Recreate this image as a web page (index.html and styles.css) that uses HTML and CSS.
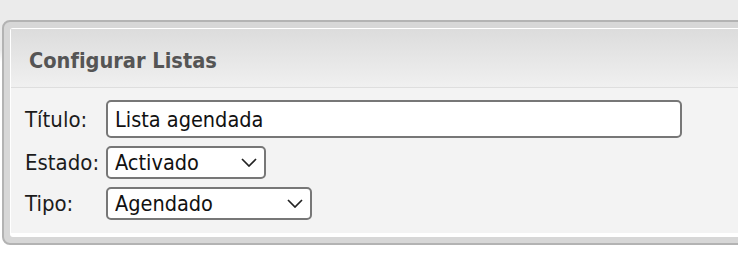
FILE: index.html
```html
<!DOCTYPE html>
<html lang="es">
<head>
<meta charset="utf-8">
<title>Configurar Listas</title>
<link rel="stylesheet" href="styles.css">
</head>
<body>
<div class="page">
  <div class="panel">
    <div class="inner">
      <div class="header">Configurar Listas</div>
      <div class="content">
        <label class="label" for="titulo">Título:</label>
        <div class="field"><input id="titulo" class="text-input" type="text" value="Lista agendada"></div>
        <label class="label" for="estado">Estado:</label>
        <div class="field">
          <div class="select-wrap select-estado">
            <select id="estado" class="select"><option>Activado</option><option>Desactivado</option></select>
            <svg class="chevron" width="16" height="9" viewBox="0 0 16 9"><polyline points="1,1 8,8 15,1" fill="none" stroke="#222" stroke-width="1.7"/></svg>
          </div>
        </div>
        <label class="label" for="tipo">Tipo:</label>
        <div class="field">
          <div class="select-wrap select-tipo">
            <select id="tipo" class="select"><option>Agendado</option><option>Manual</option></select>
            <svg class="chevron" width="16" height="9" viewBox="0 0 16 9"><polyline points="1,1 8,8 15,1" fill="none" stroke="#222" stroke-width="1.7"/></svg>
          </div>
        </div>
      </div>
    </div>
  </div>
</div>
</body>
</html>
```
FILE: styles.css
```css
html, body {
  margin: 0;
  padding: 0;
}
body {
  width: 738px;
  height: 268px;
  overflow: hidden;
  background: linear-gradient(#ebebeb 0, #ebebeb 50px, #ffffff 62px, #ffffff 100%);
  font-family: "DejaVu Sans Condensed", "DejaVu Sans", sans-serif;
  font-stretch: condensed;
  color: #1b1b1b;
}
.page {
  width: 738px;
  overflow: hidden;
  padding: 20px 0 0 2px;
  box-sizing: border-box;
}
.panel {
  width: 820px;
  border: 2px solid #b3b3b3;
  border-radius: 8px;
  background: #d7d7d7;
  padding: 6px;
}
.inner {
  border-top: 1px solid #ffffff;
  border-left: 1px solid #ffffff;
  border-bottom: 4px solid #ffffff;
  border-radius: 3px;
  background: #f3f3f3;
}
.header {
  height: 52px;
  line-height: 52px;
  padding: 6px 0 0 18px;
  background: linear-gradient(#dcdcdc, #f0f0f0);
  border-bottom: 1px solid #dedede;
  font-size: 21.6px;
  font-weight: bold;
  color: #555555;
}
.content {
  display: grid;
  grid-template-columns: 81px 1fr;
  row-gap: 8px;
  align-items: center;
  padding: 12px 14px 13px 14px;
  background: #f3f3f3;
}
.label {
  font-size: 22px;
  color: #1b1b1b;
}
.field {
  display: flex;
}
.text-input {
  box-sizing: border-box;
  width: 576px;
  height: 38px;
  border: 2px solid #777777;
  border-radius: 5px;
  background: #ffffff;
  padding: 0 0 0 7px;
  margin: 0;
  font-family: inherit;
  font-stretch: condensed;
  font-size: 21.5px;
  color: #111111;
  outline: none;
}
.select-wrap {
  position: relative;
  display: flex;
}
.select-estado { width: 160px; }
.select-tipo { width: 206px; }
.select {
  -webkit-appearance: none;
  appearance: none;
  box-sizing: border-box;
  width: 100%;
  height: 33px;
  border: 2px solid #777777;
  border-radius: 5px;
  background: #ffffff;
  padding: 0 0 0 7px;
  margin: 0;
  font-family: inherit;
  font-stretch: condensed;
  font-size: 21.5px;
  color: #111111;
  outline: none;
}
.chevron {
  position: absolute;
  right: 9px;
  top: 12px;
  pointer-events: none;
}
```
